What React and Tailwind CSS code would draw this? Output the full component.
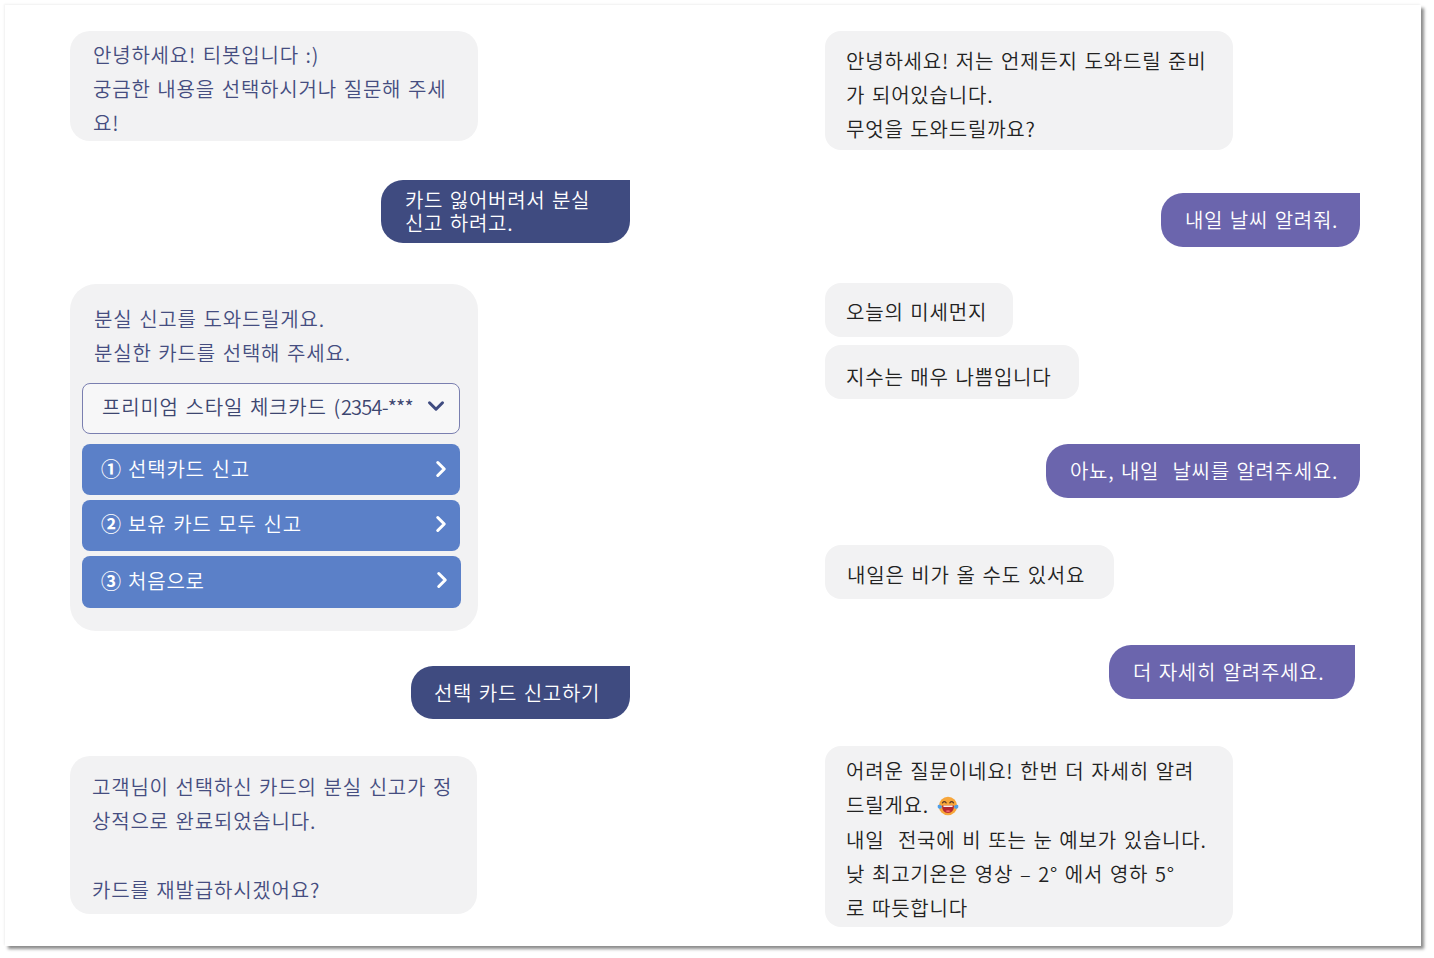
import React from "react";
import { ChevronRight, ChevronDown } from "lucide-react";

function Lines({ lines, cls, lh = "h-[34px] leading-[34px]" }) {
  return (
    <div className={cls}>
      {lines.map((l, i) => (
        <div key={i} className={`whitespace-pre ${lh}`}>{l === "" ? "\u00a0" : l}</div>
      ))}
    </div>
  );
}

function Emoji() {
  return (
    <svg viewBox="0 0 24 24" className="inline-block w-[22px] h-[22px] ml-[8px] align-[-4px]">
      <circle cx="12" cy="12" r="10" fill="#f7a63a" />
      <path d="M6 8.500q2-2.500 4 0M14 8.500q2-2.500 4 0" fill="none" stroke="#5b3a29" strokeWidth="1.400" strokeLinecap="round" />
      <path d="M5.500 11.500h13q0 8-6.500 8t-6.500-8z" fill="#b3262e" />
      <path d="M7 11.500h10v1.500h-10z" fill="#fff" />
      <path d="M9 17.500q3-2 6 0q-3 2.500-6 0z" fill="#f2686e" />
      <path d="M1 11q3-1 4.500 1.500q-.5 3-3 2.500t-1.500-4zM23 11q-3-1-4.500 1.500q.5 3 3 2.500t1.500-4z" fill="#4f9fe8" />
    </svg>
  );
}

function Action({ n, label, w = "w-[378px]", mt = "mt-[5px]", h = "h-[51px]", y = "", ty = "" }) {
  return (
    <div className={`${w} ${h} ${mt} rounded-[8px] bg-[#5b80c8] text-white flex items-center justify-between pl-[19px] pr-[6px] text-[20px]`}>
      <span className={`whitespace-pre flex items-center ${ty}`}>
        <span className="text-[20px] font-bold tracking-normal mr-[7px]">{n}</span>
        {label}
      </span>
      <ChevronRight className={`w-[26px] h-[26px] text-white ${y}`} strokeWidth={2.800} />
    </div>
  );
}

const bot = "bg-[#f2f2f3] rounded-[20px]";
const botR = "bg-[#f2f2f3] rounded-[16px]";
const navy = "bg-[#3f4b80] text-white tracking-[0.7px]";
const violet = "bg-[#6b65ad] text-white tracking-[0.7px]";
const bubbleUser = "rounded-tl-[22px] rounded-bl-[22px] rounded-br-[22px] rounded-tr-none";

export default function App() {
  return (
    <div className="w-[1434px] h-[958px] bg-white overflow-hidden pl-[5px] pt-[5px] font-['Noto_Sans_CJK_KR','Noto_Sans',sans-serif] font-[350]">
      <div className="w-[1416px] h-[941px] bg-white flex shadow-[3px_3px_3px_rgba(0,0,0,0.45),-1px_-1px_2px_rgba(0,0,0,0.06)] text-[20px] tracking-[0.8px] [word-spacing:1.500px]">
        <div className="w-[625px] ml-[65px] pt-[26px] flex flex-col items-start text-[#454d80]">
          <div className={`${bot} w-[408px] h-[110px] pl-[23px] pt-[7px]`}>
            <Lines lines={["안녕하세요! 티봇입니다 :)", "궁금한 내용을 선택하시거나 질문해 주세", "요!"]} />
          </div>
          <div className={`${navy} ${bubbleUser} self-end mt-[39px] w-[249px] h-[63px] mr-[65px] pl-[24px] pt-[8px] leading-[23px]`}>
            <div className="whitespace-pre">카드 잃어버려서 분실</div>
            <div className="whitespace-pre">신고 하려고.</div>
          </div>
          <div className={`${bot} rounded-[26px] mt-[41px] w-[408px] h-[347px] pl-[12px] pt-[18px]`}>
            <Lines cls="pl-[12px]" lines={["분실 신고를 도와드릴게요.", "분실한 카드를 선택해 주세요."]} />
            <div className="mt-[13px] w-[378px] h-[51px] rounded-[8px] border border-[#7a7fb0] bg-[#f7f7f8] flex items-center justify-between pl-[19px] pr-[10px] text-[#3d4670] text-[20px]">
              <span className="whitespace-pre -mt-[3px]">프리미엄 스타일 체크카드 (<span className="tracking-[-0.8px]">2354-***</span></span>
              <ChevronDown className="w-[26px] h-[26px] text-[#3f4b80] -mt-[6px]" strokeWidth={2.800} />
            </div>
            <Action n="①" label="선택카드 신고" mt="mt-[10px]" ty="-mt-[2px]" y="-mt-[1px]" />
            <Action n="②" label="보유 카드 모두 신고" ty="-mt-[3px]" y="-mt-[3px]" />
            <Action n="③" label="처음으로" w="w-[379px]" h="h-[52px]" ty="-mt-[2px]" y="-mt-[4px]" />
          </div>
          <div className={`${navy} ${bubbleUser} self-end mt-[35px] w-[219px] h-[53px] mr-[65px] flex items-center pl-[23px]`}>
            <span className="whitespace-pre">선택 카드 신고하기</span>
          </div>
          <div className={`${bot} mt-[37px] w-[407px] h-[158px] pl-[22px] pt-[14px]`}>
            <Lines lh="h-[34.300px] leading-[34.300px]" lines={["고객님이 선택하신 카드의 분실 신고가 정", "상적으로 완료되었습니다.", "", "카드를 재발급하시겠어요?"]} />
          </div>
        </div>

        <div className="w-[535px] ml-[130px] pt-[26px] flex flex-col items-start text-[#222222]">
          <div className={`${botR} w-[408px] h-[119px] pl-[21px] pt-[13px]`}>
            <Lines lines={["안녕하세요! 저는 언제든지 도와드릴 준비", "가 되어있습니다.", "무엇을 도와드릴까요?"]} />
          </div>
          <div className={`${violet} ${bubbleUser} self-end mt-[43px] w-[199px] h-[54px] flex items-center pl-[24px]`}>
            <span className="whitespace-pre">내일 날씨 알려줘.</span>
          </div>
          <div className={`${botR} mt-[36px] w-[188px] h-[54px] pl-[21px] pt-[12px]`}>
            <Lines lines={["오늘의 미세먼지"]} />
          </div>
          <div className={`${botR} mt-[8px] w-[254px] h-[54px] pl-[21px] pt-[15px]`}>
            <Lines lines={["지수는 매우 나쁨입니다"]} />
          </div>
          <div className={`${violet} ${bubbleUser} self-end mt-[45px] w-[314px] h-[54px] flex items-center pl-[24px]`}>
            <span className="whitespace-pre">아뇨, 내일  날씨를 알려주세요.</span>
          </div>
          <div className={`${botR} mt-[47px] w-[289px] h-[54px] pl-[22px] pt-[13px]`}>
            <Lines lines={["내일은 비가 올 수도 있서요"]} />
          </div>
          <div className={`${violet} ${bubbleUser} self-end mt-[46px] mr-[5px] w-[246px] h-[54px] flex items-center pl-[24px]`}>
            <span className="whitespace-pre">더 자세히 알려주세요.</span>
          </div>
          <div className={`${botR} mt-[47px] w-[408px] h-[181px] pl-[21px] pt-[8px]`}>
            <div className="whitespace-pre h-[34.300px] leading-[34.300px]">어려운 질문이네요! 한번 더 자세히 알려</div>
            <div className="whitespace-pre h-[34.300px] leading-[34.300px]">드릴게요.<Emoji /></div>
            <div className="whitespace-pre h-[34.300px] leading-[34.300px]">내일  전국에 비 또는 눈 예보가 있습니다.</div>
            <div className="whitespace-pre h-[34.300px] leading-[34.300px]">낮 최고기온은 영상 – 2° 에서 영하 5°</div>
            <div className="whitespace-pre h-[34.300px] leading-[34.300px]">로 따듯합니다</div>
          </div>
        </div>
      </div>
    </div>
  );
}
